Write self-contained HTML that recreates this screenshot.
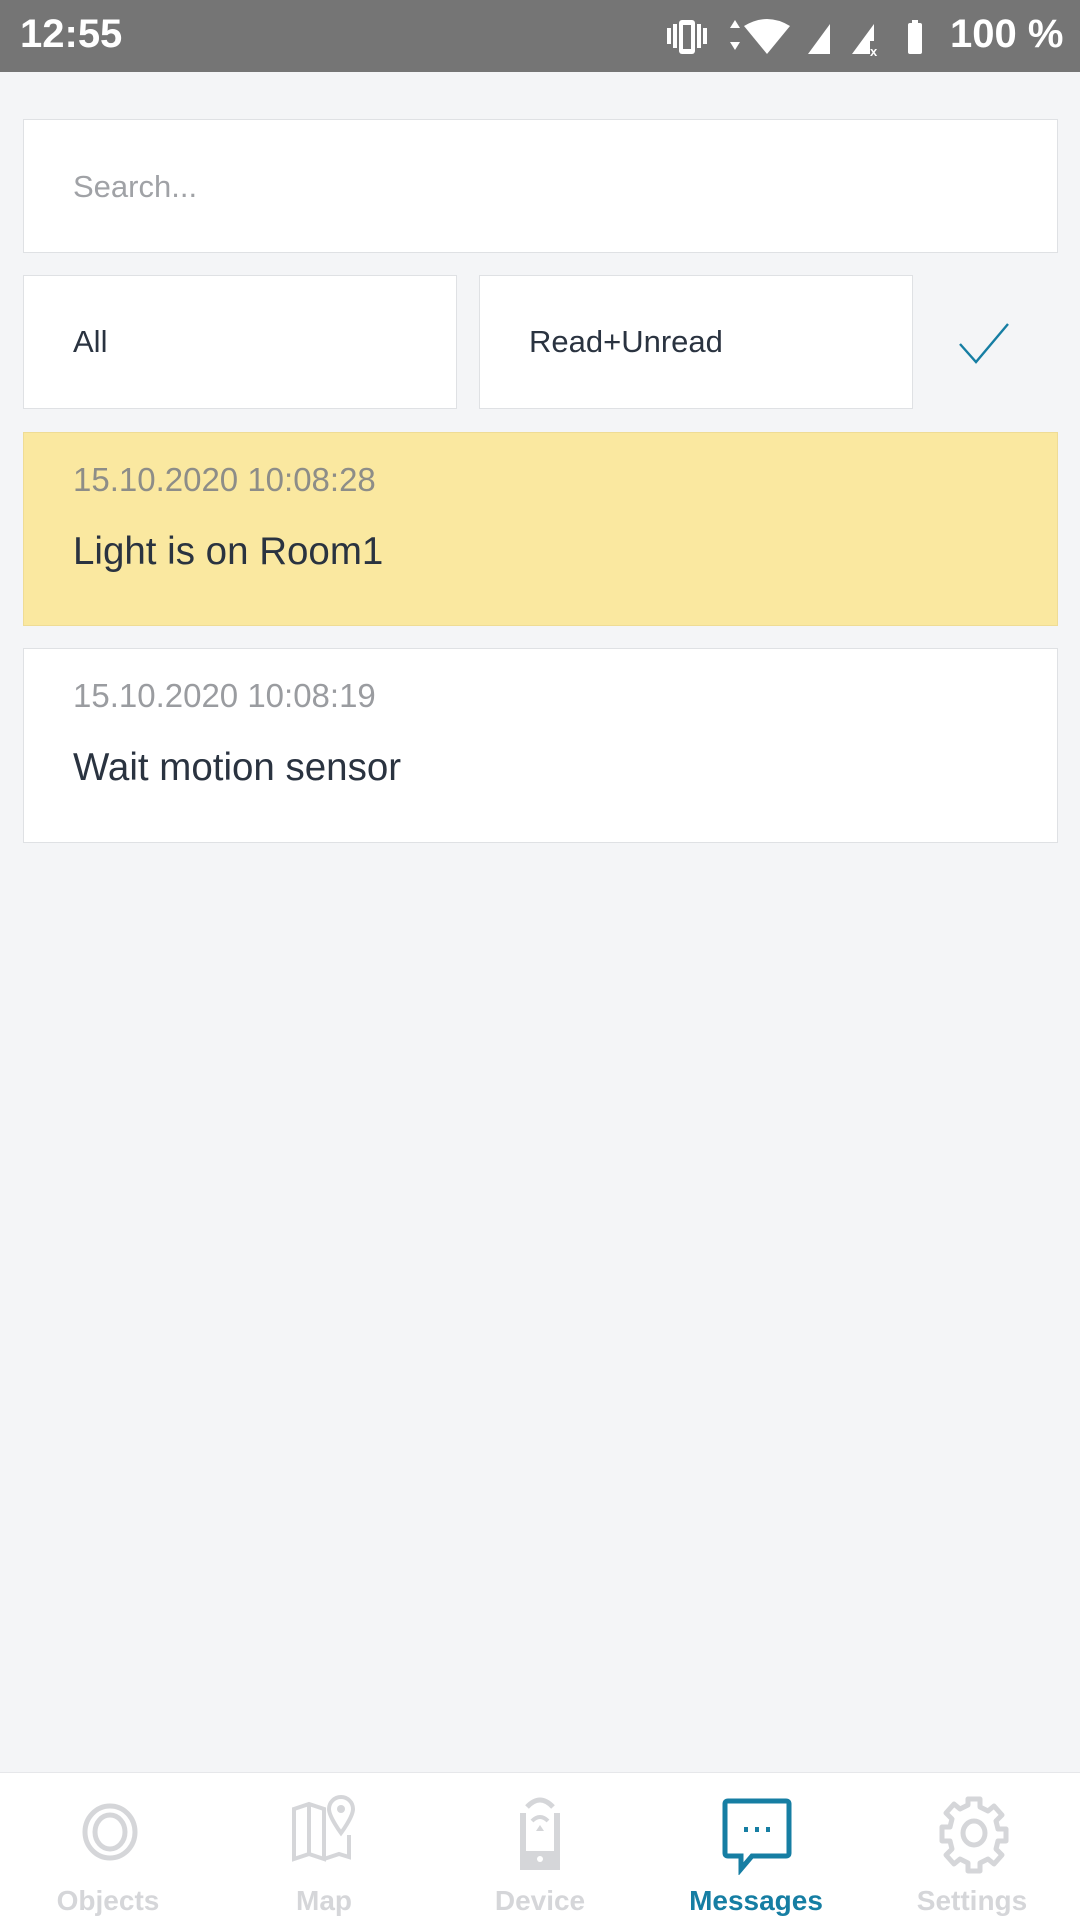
<!DOCTYPE html>
<html><head><meta charset="utf-8"><style>
*{margin:0;padding:0;box-sizing:border-box}
body{width:1080px;height:1920px;background:#f4f5f7;font-family:"Liberation Sans",sans-serif;position:relative;overflow:hidden}
.sb{position:absolute;top:0;left:0;width:1080px;height:72px;background:#757575;color:#fff}
.box{position:absolute;background:#fff;border:1px solid #dfe1e4}
.t{position:absolute;left:49px}
.nav{position:absolute;top:1772px;left:0;width:1080px;height:148px;background:#fff;border-top:1px solid #e6e7ea}
.it{position:absolute;top:0;width:216px;text-align:center}
.it svg{position:absolute;top:22px;left:73px}
.it span{position:absolute;top:112px;left:0;width:216px;font-size:28px;font-weight:bold;color:#d5d6d9}
</style></head><body>
<div class="sb">
<div style="position:absolute;left:20px;top:12px;font-size:40px;font-weight:bold">12:55</div>
<svg style="position:absolute;left:665px;top:18px" width="300" height="40" viewBox="0 0 300 40">
<g fill="#fff"><rect x="2" y="10" width="4" height="16"/><rect x="8" y="6" width="4" height="24"/><rect x="14" y="2" width="16" height="34" rx="3"/><rect x="18" y="7" width="8" height="24" fill="#757575"/><rect x="32" y="6" width="4" height="24"/><rect x="38" y="10" width="4" height="16"/>
<path d="M70 2l5 8h-10zM70 32l5-8h-10z"/>
<path d="M79 8q23-14 46 0l-23 28z"/>
<path d="M143 36l22-30v30z"/>
<path d="M187 36l22-30v17h-4v13z"/><text x="205" y="38" font-size="13" font-family="Liberation Sans" font-weight="bold">x</text>
<rect x="247" y="2" width="6" height="4"/><rect x="243" y="5" width="14" height="31" rx="2"/></g></svg>
<div style="position:absolute;left:950px;top:12px;font-size:40px;font-weight:bold">100 %</div>
</div>
<div class="box" style="left:23px;top:119px;width:1035px;height:134px"><div class="t" style="top:49px;font-size:31px;color:#a0a2a6">Search...</div></div>
<div class="box" style="left:23px;top:275px;width:434px;height:134px"><div class="t" style="top:48px;font-size:31px;color:#2a3340">All</div></div>
<div class="box" style="left:479px;top:275px;width:434px;height:134px"><div class="t" style="top:48px;font-size:31px;color:#2a3340">Read+Unread</div></div>
<svg style="position:absolute;left:958px;top:322px" width="52" height="42" viewBox="0 0 52 42"><path d="M2 22l16 18L50 2" fill="none" stroke="#167ea3" stroke-width="2.4"/></svg>
<div class="box" style="left:23px;top:432px;width:1035px;height:194px;background:#fae8a0;border-color:#efdc95">
<div class="t" style="top:28px;font-size:33px;color:#8d8d88">15.10.2020 10:08:28</div>
<div class="t" style="top:97px;font-size:38.5px;color:#2a3340">Light is on Room1</div></div>
<div class="box" style="left:23px;top:648px;width:1035px;height:195px">
<div class="t" style="top:28px;font-size:33px;color:#9a9ca0">15.10.2020 10:08:19</div>
<div class="t" style="top:97px;font-size:38.5px;color:#2a3340">Wait motion sensor</div></div>
<div class="nav">
<div class="it" style="left:0"><svg width="70" height="76" viewBox="0 0 70 76"><ellipse cx="37" cy="37" rx="25" ry="26" fill="none" stroke="#d5d6d9" stroke-width="5"/><ellipse cx="37" cy="37" rx="15" ry="17" fill="none" stroke="#d5d6d9" stroke-width="5"/></svg><span>Objects</span></div>
<div class="it" style="left:216px"><svg width="70" height="76" viewBox="0 0 70 76"><path d="M5 14l15-5 15 5v50l-15-5-15 5zM20 9v50M35 64l15-5 10 3V40" fill="none" stroke="#d5d6d9" stroke-width="4"/><path d="M52 2a12 12 0 0 1 12 12c0 8-12 24-12 24S40 22 40 14A12 12 0 0 1 52 2z" fill="none" stroke="#d5d6d9" stroke-width="4"/><circle cx="52" cy="14" r="4" fill="#d5d6d9"/></svg><span>Map</span></div>
<div class="it" style="left:432px"><svg width="70" height="80" viewBox="0 0 70 80"><path d="M22 12q13-14 26 0" fill="none" stroke="#d5d6d9" stroke-width="5"/><path d="M18 18v54h34V18" fill="none" stroke="#d5d6d9" stroke-width="6"/><rect x="18" y="56" width="34" height="16" fill="#d5d6d9"/><circle cx="35" cy="64" r="3" fill="#fff"/><path d="M27 26q8-8 16 0" fill="none" stroke="#d5d6d9" stroke-width="4"/><path d="M31 36l4-6 4 6z" fill="#d5d6d9"/></svg><span>Device</span></div>
<div class="it" style="left:648px"><svg width="72" height="80" viewBox="0 0 72 80"><path d="M7 6h58q3 0 3 3v49q0 3-3 3H31L20 74V61H7q-3 0-3-3V9q0-3 3-3z" fill="none" stroke="#167ea3" stroke-width="5"/><g fill="#167ea3"><rect x="23" y="32" width="4" height="5"/><rect x="34" y="32" width="4" height="5"/><rect x="45" y="32" width="4" height="5"/></g></svg><span style="color:#167ea3">Messages</span></div>
<div class="it" style="left:864px"><svg width="74" height="80" viewBox="0 0 74 80"><path d="M31 4h12v8l8 4 6-5 8 9-6 6 2 8h8v12h-8l-2 8 6 6-8 9-6-5-8 4v8H31v-8l-8-4-6 5-8-9 6-6-2-8H5V32h8l2-8-6-6 8-9 6 5 8-4z" fill="none" stroke="#d5d6d9" stroke-width="5" stroke-linejoin="round"/><ellipse cx="37" cy="38" rx="11" ry="12" fill="none" stroke="#d5d6d9" stroke-width="5"/></svg><span>Settings</span></div>
</div>
</body></html>
